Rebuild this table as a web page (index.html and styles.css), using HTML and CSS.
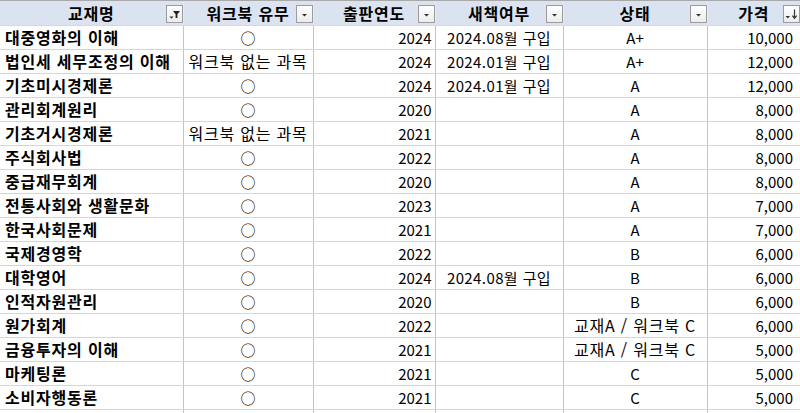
FILE: index.html
```html
<!DOCTYPE html>
<html lang="ko">
<head>
<meta charset="utf-8">
<link rel="stylesheet" href="styles.css">
</head>
<body>
<table class="sheet">
  <colgroup>
    <col class="c1"><col class="c2"><col class="c3"><col class="c4"><col class="c5"><col class="c6">
  </colgroup>
  <thead>
    <tr>
      <th>교재명<span class="fbtn"><svg width="15" height="16" viewBox="0 0 15 16"><path d="M6 5h7l-2.6 3.2V12H8.6V8.2z" fill="#222"/><path d="M2.5 10.5h4l-2 2.2z" fill="#333"/></svg></span></th>
      <th>워크북 유무<span class="fbtn"><svg width="15" height="16" viewBox="0 0 15 16"><path d="M5 8h5l-2.5 2.6z" fill="#333"/></svg></span></th>
      <th>출판연도<span class="fbtn"><svg width="15" height="16" viewBox="0 0 15 16"><path d="M5 8h5l-2.5 2.6z" fill="#333"/></svg></span></th>
      <th>새책여부<span class="fbtn"><svg width="15" height="16" viewBox="0 0 15 16"><path d="M5 8h5l-2.5 2.6z" fill="#333"/></svg></span></th>
      <th>상태<span class="fbtn"><svg width="15" height="16" viewBox="0 0 15 16"><path d="M5 8h5l-2.5 2.6z" fill="#333"/></svg></span></th>
      <th>가격<span class="fbtn"><svg width="15" height="16" viewBox="0 0 15 16"><path d="M1.5 10h4.5l-2.25 2.4z" fill="#333"/><path d="M10.5 3.5v8.5M8.3 9.6l2.2 2.6 2.2-2.6" stroke="#333" stroke-width="1.2" fill="none"/></svg></span></th>
    </tr>
  </thead>
  <tbody>
    <tr><td class="name">대중영화의 이해</td><td class="ctr">○</td><td class="num">2024</td><td class="ctr mix">2024.08월 구입</td><td class="ctr">A+</td><td class="num">10,000</td></tr>
    <tr><td class="name">법인세 세무조정의 이해</td><td class="ctr ko">워크북 없는 과목</td><td class="num">2024</td><td class="ctr mix">2024.01월 구입</td><td class="ctr">A+</td><td class="num">12,000</td></tr>
    <tr><td class="name">기초미시경제론</td><td class="ctr">○</td><td class="num">2024</td><td class="ctr mix">2024.01월 구입</td><td class="ctr">A</td><td class="num">12,000</td></tr>
    <tr><td class="name">관리회계원리</td><td class="ctr">○</td><td class="num">2020</td><td class="ctr"></td><td class="ctr">A</td><td class="num">8,000</td></tr>
    <tr><td class="name">기초거시경제론</td><td class="ctr ko">워크북 없는 과목</td><td class="num">2021</td><td class="ctr"></td><td class="ctr">A</td><td class="num">8,000</td></tr>
    <tr><td class="name">주식회사법</td><td class="ctr">○</td><td class="num">2022</td><td class="ctr"></td><td class="ctr">A</td><td class="num">8,000</td></tr>
    <tr><td class="name">중급재무회계</td><td class="ctr">○</td><td class="num">2020</td><td class="ctr"></td><td class="ctr">A</td><td class="num">8,000</td></tr>
    <tr><td class="name">전통사회와 생활문화</td><td class="ctr">○</td><td class="num">2023</td><td class="ctr"></td><td class="ctr">A</td><td class="num">7,000</td></tr>
    <tr><td class="name">한국사회문제</td><td class="ctr">○</td><td class="num">2021</td><td class="ctr"></td><td class="ctr">A</td><td class="num">7,000</td></tr>
    <tr><td class="name">국제경영학</td><td class="ctr">○</td><td class="num">2022</td><td class="ctr"></td><td class="ctr">B</td><td class="num">6,000</td></tr>
    <tr><td class="name">대학영어</td><td class="ctr">○</td><td class="num">2024</td><td class="ctr mix">2024.08월 구입</td><td class="ctr">B</td><td class="num">6,000</td></tr>
    <tr><td class="name">인적자원관리</td><td class="ctr">○</td><td class="num">2020</td><td class="ctr"></td><td class="ctr">B</td><td class="num">6,000</td></tr>
    <tr><td class="name">원가회계</td><td class="ctr">○</td><td class="num">2022</td><td class="ctr"></td><td class="ctr ko">교재A / 워크북 C</td><td class="num">6,000</td></tr>
    <tr><td class="name">금융투자의 이해</td><td class="ctr">○</td><td class="num">2021</td><td class="ctr"></td><td class="ctr ko">교재A / 워크북 C</td><td class="num">5,000</td></tr>
    <tr><td class="name">마케팅론</td><td class="ctr">○</td><td class="num">2021</td><td class="ctr"></td><td class="ctr">C</td><td class="num">5,000</td></tr>
    <tr><td class="name">소비자행동론</td><td class="ctr">○</td><td class="num">2021</td><td class="ctr"></td><td class="ctr">C</td><td class="num">5,000</td></tr>
    <tr class="blank"><td></td><td></td><td></td><td></td><td></td><td></td></tr>
  </tbody>
</table>
</body>
</html>
```

FILE: styles.css
```css
html, body {
  margin: 0;
  padding: 0;
  background: #ffffff;
  overflow: hidden;
}
.sheet {
  width: 800px;
  table-layout: fixed;
  border-collapse: collapse;
  font-family: "Noto Sans CJK KR", "Noto Sans", sans-serif;
  font-size: 15px;
  color: #000;
}
.c1 { width: 183px; }
.c2 { width: 130px; }
.c3 { width: 122px; }
.c4 { width: 128px; }
.c5 { width: 144px; }
.c6 { width: 93px; }

.sheet th {
  position: relative;
  height: 24px;
  padding: 0;
  background: #dce3f0;
  border-top: 1px solid #a9a9a9;
  border-bottom: 1px solid #d4d8e0;
  border-left: 1px solid #e6eaf3;
  font-size: 16px;
  letter-spacing: 0.8px;
  font-weight: 700;
  text-align: center;
  line-height: 24px;
  white-space: nowrap;
}
.sheet th:first-child { border-left: none; }
.fbtn {
  position: absolute;
  right: 0;
  top: 4px;
  width: 15px;
  height: 16px;
  border: 1px solid #9c9c9c;
  background: linear-gradient(#ffffff, #ececec);
  display: flex;
}
.sheet td {
  height: 23px;
  padding: 0;
  border-bottom: 1px solid #d6d6d6;
  border-left: 1px solid #c4c4c4;
  line-height: 23px;
  white-space: nowrap;
  overflow: hidden;
}
.sheet td:first-child { border-left: none; }
.name {
  font-weight: 700;
  font-size: 16px;
  letter-spacing: 0.8px;
  padding-left: 5px !important;
}
.ko {
  font-size: 16px;
  letter-spacing: 0.8px;
}
.mix {
  letter-spacing: 0.4px;
}
.ctr { text-align: center; }
.num {
  text-align: right;
  padding-right: 3px !important;
}
.sheet td:last-child.num { padding-right: 7px !important; }
.blank td { border-bottom: none; }
```
